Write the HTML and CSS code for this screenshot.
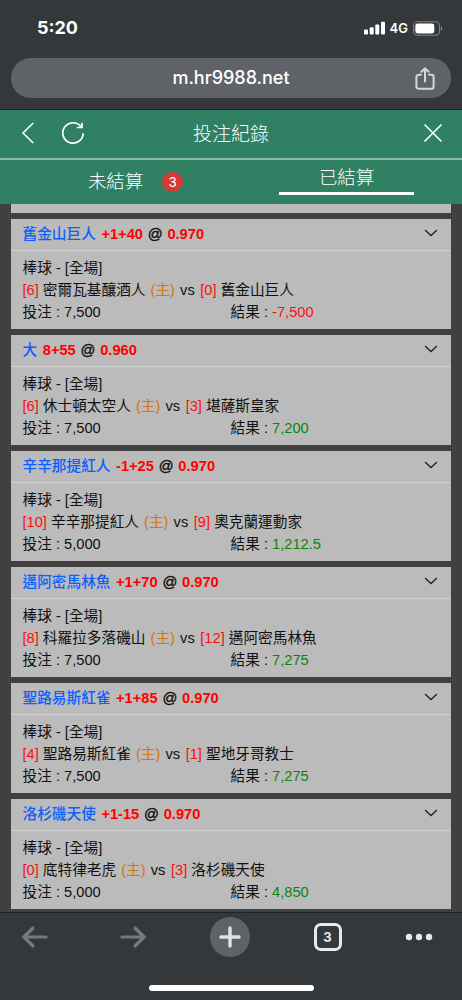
FILE: index.html
```
<!DOCTYPE html>
<html lang="zh-Hant">
<head>
    <meta charset="UTF-8">
    <meta name="viewport" content="width=device-width, initial-scale=1.0">
    <title>投注紀錄</title>
    <link rel="stylesheet" href="styles.css">
</head>
<body>
    <div class="browser-top">
        <div class="status-bar">
            <span class="time">5:20</span>
            <div class="status-icons">
                <svg class="signal" width="21" height="14" viewBox="0 0 21 14" fill="#fff">
                    <rect x="0" y="8.5" width="4" height="5" rx="1"/>
                    <rect x="5.7" y="6.3" width="4" height="7.2" rx="1"/>
                    <rect x="11.3" y="3.5" width="4" height="10" rx="1"/>
                    <rect x="17" y="0.7" width="4" height="12.8" rx="1"/>
                </svg>
                <span class="network">4G</span>
                <svg class="battery" width="30" height="15" viewBox="0 0 30 15">
                    <rect x="0.6" y="0.8" width="26" height="13.4" rx="4" fill="none" stroke="#818486" stroke-width="1.1"/>
                    <rect x="2.3" y="2.5" width="19" height="10" rx="2.4" fill="#fff"/>
                    <path d="M28 5.2c1.8.8 1.8 3.8 0 4.6z" fill="#818486"/>
                </svg>
            </div>
        </div>
        <div class="address-bar">
            <span class="url">m.hr9988.net</span>
            <svg class="share" width="20" height="24" viewBox="0 0 20 24" fill="none" stroke="#d5d8dc" stroke-width="2" stroke-linecap="round" stroke-linejoin="round">
                <path d="M6 7.8H3.6A2.2 2.2 0 0 0 1.4 10v9.6a2.2 2.2 0 0 0 2.2 2.2h12.8a2.2 2.2 0 0 0 2.2-2.2V10a2.2 2.2 0 0 0-2.2-2.2H14M10 14.5V2M6.4 4.8L10 1.4l3.6 3.4"/>
            </svg>
        </div>
    </div>

    <div class="header">
        <div class="header-left">
            <svg width="14" height="24" viewBox="0 0 14 24" fill="none" stroke="#fff" stroke-width="1.6">
                <path d="M12.2 2L2 12l10.2 10"/>
            </svg>
            <svg class="reload" width="24" height="24" viewBox="0 0 24 24" fill="none" stroke="#fff" stroke-width="1.7">
                <path d="M22.2 12.2A10.2 10.2 0 1 1 19.8 5.4M21 1.8v4.7h-5.2"/>
            </svg>
        </div>
        <div class="title">投注紀錄</div>
        <svg class="close" width="20" height="20" viewBox="0 0 20 20" fill="none" stroke="#fff" stroke-width="1.6">
            <path d="M1.5 1.5l17 17M18.5 1.5l-17 17"/>
        </svg>
    </div>
    <div class="tabs">
        <div class="tab">未結算<span class="badge">3</span></div>
        <div class="tab tab-active"><span class="tab-label">已結算</span></div>
    </div>

    <div class="records">
        <div class="card card-cut"></div>

        <div class="card">
            <div class="card-head">
                <div><span class="pick">舊金山巨人</span> <span class="odds">+1+40</span> <b>@</b> <span class="odds">0.970</span></div>
                <svg class="arrow" width="14" height="8" viewBox="0 0 14 8"><path d="M1 1l6 5.5L13 1"/></svg>
            </div>
            <div class="card-body">
                <div>棒球 - [全場]</div>
                <div><span class="score">[6]</span> 密爾瓦基釀酒人 <span class="home">(主)</span> <span class="vs">vs</span> <span class="score">[0]</span> 舊金山巨人</div>
                <div class="amounts"><span>投注 : 7,500</span><span>結果 : <span class="lose">-7,500</span></span></div>
            </div>
        </div>

        <div class="card">
            <div class="card-head">
                <div><span class="pick">大</span> <span class="odds">8+55</span> <b>@</b> <span class="odds">0.960</span></div>
                <svg class="arrow" width="14" height="8" viewBox="0 0 14 8"><path d="M1 1l6 5.5L13 1"/></svg>
            </div>
            <div class="card-body">
                <div>棒球 - [全場]</div>
                <div><span class="score">[6]</span> 休士頓太空人 <span class="home">(主)</span> <span class="vs">vs</span> <span class="score">[3]</span> 堪薩斯皇家</div>
                <div class="amounts"><span>投注 : 7,500</span><span>結果 : <span class="win">7,200</span></span></div>
            </div>
        </div>

        <div class="card">
            <div class="card-head">
                <div><span class="pick">辛辛那提紅人</span> <span class="odds">-1+25</span> <b>@</b> <span class="odds">0.970</span></div>
                <svg class="arrow" width="14" height="8" viewBox="0 0 14 8"><path d="M1 1l6 5.5L13 1"/></svg>
            </div>
            <div class="card-body">
                <div>棒球 - [全場]</div>
                <div><span class="score">[10]</span> 辛辛那提紅人 <span class="home">(主)</span> <span class="vs">vs</span> <span class="score">[9]</span> 奧克蘭運動家</div>
                <div class="amounts"><span>投注 : 5,000</span><span>結果 : <span class="win">1,212.5</span></span></div>
            </div>
        </div>

        <div class="card">
            <div class="card-head">
                <div><span class="pick">邁阿密馬林魚</span> <span class="odds">+1+70</span> <b>@</b> <span class="odds">0.970</span></div>
                <svg class="arrow" width="14" height="8" viewBox="0 0 14 8"><path d="M1 1l6 5.5L13 1"/></svg>
            </div>
            <div class="card-body">
                <div>棒球 - [全場]</div>
                <div><span class="score">[8]</span> 科羅拉多落磯山 <span class="home">(主)</span> <span class="vs">vs</span> <span class="score">[12]</span> 邁阿密馬林魚</div>
                <div class="amounts"><span>投注 : 7,500</span><span>結果 : <span class="win">7,275</span></span></div>
            </div>
        </div>

        <div class="card">
            <div class="card-head">
                <div><span class="pick">聖路易斯紅雀</span> <span class="odds">+1+85</span> <b>@</b> <span class="odds">0.970</span></div>
                <svg class="arrow" width="14" height="8" viewBox="0 0 14 8"><path d="M1 1l6 5.5L13 1"/></svg>
            </div>
            <div class="card-body">
                <div>棒球 - [全場]</div>
                <div><span class="score">[4]</span> 聖路易斯紅雀 <span class="home">(主)</span> <span class="vs">vs</span> <span class="score">[1]</span> 聖地牙哥教士</div>
                <div class="amounts"><span>投注 : 7,500</span><span>結果 : <span class="win">7,275</span></span></div>
            </div>
        </div>

        <div class="card">
            <div class="card-head">
                <div><span class="pick">洛杉磯天使</span> <span class="odds">+1-15</span> <b>@</b> <span class="odds">0.970</span></div>
                <svg class="arrow" width="14" height="8" viewBox="0 0 14 8"><path d="M1 1l6 5.5L13 1"/></svg>
            </div>
            <div class="card-body">
                <div>棒球 - [全場]</div>
                <div><span class="score">[0]</span> 底特律老虎 <span class="home">(主)</span> <span class="vs">vs</span> <span class="score">[3]</span> 洛杉磯天使</div>
                <div class="amounts"><span>投注 : 5,000</span><span>結果 : <span class="win">4,850</span></span></div>
            </div>
        </div>
    </div>

    <div class="toolbar">
        <div class="toolbar-buttons">
            <svg class="back" width="28" height="24" viewBox="0 0 28 24" fill="none" stroke="#77797c" stroke-width="3.2" stroke-linecap="round" stroke-linejoin="round">
                <path d="M25 12H2.8M12 3L2.8 12l9.2 9"/>
            </svg>
            <svg width="28" height="24" viewBox="0 0 28 24" fill="none" stroke="#77797c" stroke-width="3.2" stroke-linecap="round" stroke-linejoin="round">
                <path d="M3 12h22.2M16 3l9.2 9-9.2 9"/>
            </svg>
            <div class="new-tab">
                <svg width="22" height="22" viewBox="0 0 22 22" stroke="#e0e2e8" stroke-width="3.4" stroke-linecap="round">
                    <path d="M11 2v18M2 11h18"/>
                </svg>
            </div>
            <div class="tab-count">3</div>
            <svg width="28" height="8" viewBox="0 0 28 8" fill="#e8eaed">
                <circle cx="4" cy="4" r="3.2"/>
                <circle cx="14" cy="4" r="3.2"/>
                <circle cx="24" cy="4" r="3.2"/>
            </svg>
        </div>
        <div class="home-bar"></div>
    </div>
</body>
</html>
```
FILE: styles.css
```
* {
    box-sizing: border-box;
}

body {
    margin: 0;
    height: 1000px;
    display: flex;
    flex-direction: column;
    overflow: hidden;
    background-color: #404040;
    font-family: "Liberation Sans", "Noto Sans CJK TC", sans-serif;
}

svg {
    display: block;
    flex-shrink: 0;
}

/* Browser top */
.browser-top {
    height: 110px;
    flex-shrink: 0;
    padding: 0 11px;
    background-color: #35383b;
    border-bottom: 1px solid #202326;
    font-family: Inter, sans-serif;
    color: #fff;
}

.status-bar {
    height: 58px;
    padding: 0 8px 2px 26px;
    display: flex;
    align-items: center;
    justify-content: space-between;
}

.time {
    padding-bottom: 2px;
    font-size: 18px;
    font-weight: 700;
}

.status-icons {
    display: flex;
    align-items: center;
}

.network {
    margin: 0 5px;
    font-size: 13px;
    font-weight: 600;
}

.address-bar {
    height: 40px;
    padding: 0 16px;
    border-radius: 20px;
    display: grid;
    grid-template-columns: 20px 1fr 20px;
    align-items: center;
    background-color: #5f6367;
}

.url {
    grid-column: 2;
    padding-bottom: 2px;
    text-align: center;
    font-size: 18px;
    font-weight: 500;
}

.share {
    margin-top: 2px;
}

/* Page header */
.header {
    height: 50px;
    flex-shrink: 0;
    padding: 0 19px 2px 21px;
    display: grid;
    grid-template-columns: 88px 1fr 90px;
    align-items: center;
    background-color: #308064;
    border-bottom: 2px solid #8fb8a9;
    color: #fff;
}

.header-left {
    display: flex;
}

.reload {
    margin-left: 26px;
}

.title {
    padding-bottom: 2px;
    text-align: center;
    font-size: 19px;
    font-weight: 300;
}

.close {
    justify-self: end;
}

.tabs {
    height: 44px;
    flex-shrink: 0;
    display: grid;
    grid-template-columns: 1fr 1fr;
    background-color: #308064;
    color: #fff;
    font-size: 18.4px;
    font-weight: 300;
    line-height: 42px;
}

.tab {
    display: flex;
    align-items: center;
    justify-content: center;
    padding-left: 40px;
}

.tab-active {
    align-items: flex-start;
    padding-left: 0;
}

.tab-label {
    width: 135px;
    height: 35px;
    line-height: 36px;
    text-align: center;
    border-bottom: 3px solid #fff;
}

.badge {
    width: 21px;
    height: 20px;
    margin-left: 19px;
    border-radius: 50%;
    background-color: #d63a35;
    font-size: 14px;
    line-height: 20px;
    text-align: center;
}

/* Bet records */
.records {
    height: 708px;
    flex-shrink: 0;
    padding: 0 11px;
    display: flex;
    flex-direction: column;
    gap: 6px;
    overflow: hidden;
    font-size: 14.67px;
    color: #111;
}

.card {
    height: 110px;
    flex-shrink: 0;
    background-color: #bbb;
    white-space: nowrap;
}

.card-cut {
    height: 9px;
}

.card-head {
    height: 32px;
    padding: 0 13px 4px 11.5px;
    display: flex;
    align-items: center;
    justify-content: space-between;
    border-bottom: 1px solid #cfcfcf;
    font-weight: 700;
}

.pick {
    margin-right: 1.5px;
    color: #0a60ff;
    font-weight: 500;
}

.odds {
    color: #f00;
}

.card-head b {
    margin: 0 0.7px;
    font-weight: 400;
    -webkit-text-stroke: 0.4px #111;
}

.arrow {
    fill: none;
    stroke: #222;
    stroke-width: 1.3;
}

.card-body {
    padding: 6px 11.5px 0;
    line-height: 22px;
}

.card-body > div {
    height: 22px;
}

.amounts {
    display: grid;
    grid-template-columns: 208px 1fr;
}

.score,
.lose {
    color: #fa1010;
}

.home {
    margin: 0 1px;
    color: #d9730b;
}

.vs {
    margin-right: 1.5px;
}

.win {
    color: #0a850a;
}

/* Browser bottom */
.toolbar {
    height: 88px;
    flex-shrink: 0;
    padding-top: 4px;
    background-color: #35383b;
    border-top: 1px solid #202326;
}

.toolbar-buttons {
    height: 40px;
    padding: 0 29px 0 21px;
    display: flex;
    align-items: center;
    justify-content: space-between;
}

.back {
    margin-right: 6px;
}

.new-tab {
    width: 40px;
    height: 40px;
    border-radius: 50%;
    display: flex;
    align-items: center;
    justify-content: center;
    background-color: #5f6367;
}

.tab-count {
    width: 28px;
    height: 28px;
    border: 3px solid #e8eaed;
    border-radius: 7px;
    color: #e8eaed;
    font: 700 13px/22px Inter, sans-serif;
    text-align: center;
}

.home-bar {
    width: 165px;
    height: 6px;
    margin: 28px auto 0;
    border-radius: 3px;
    background-color: #fff;
}
```
